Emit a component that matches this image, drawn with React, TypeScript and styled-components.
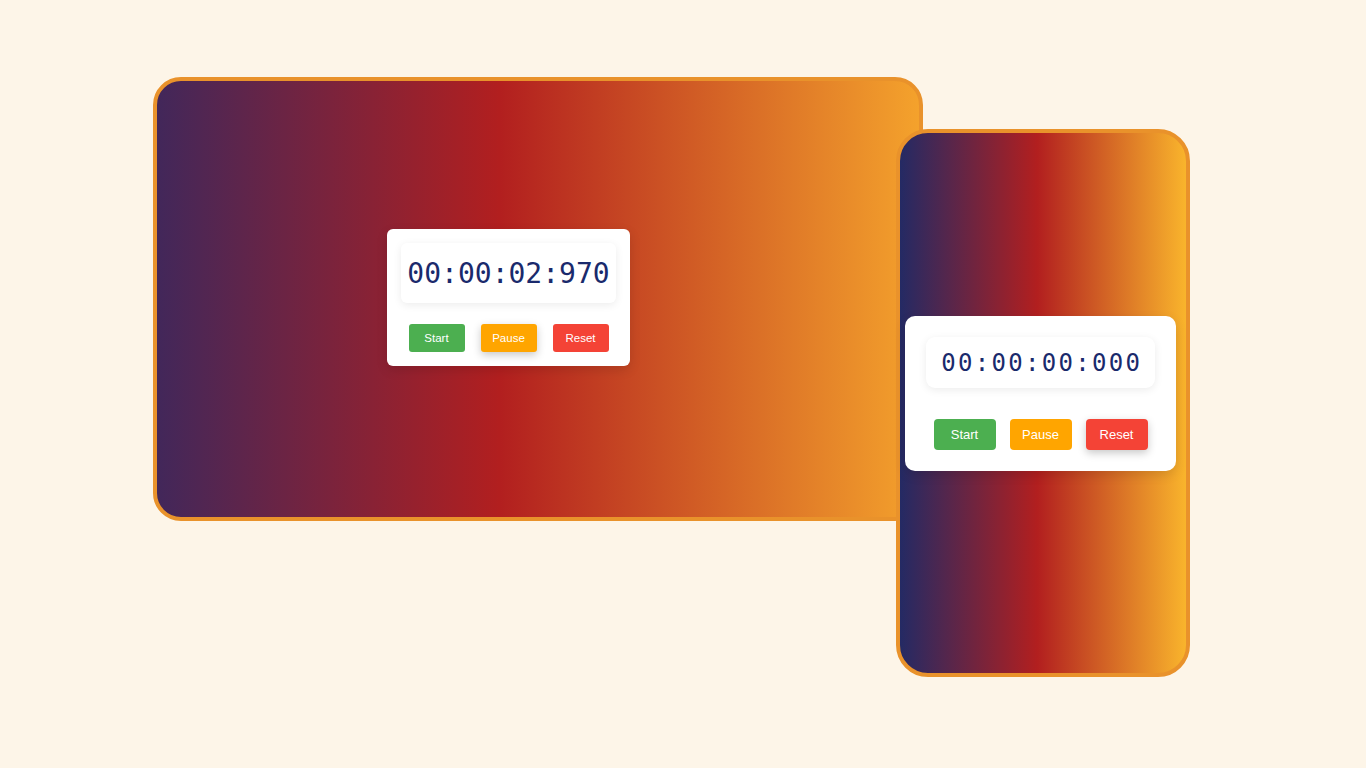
import React from "react";
import styled, { createGlobalStyle } from "styled-components";

const Global = createGlobalStyle`
  html, body { margin: 0; padding: 0; background: #fdf5e8; }
  body { font-family: "Liberation Sans", Arial, sans-serif; }
`;

const Stage = styled.div`
  display: flex;
  align-items: flex-start;
  padding: 77px 0 0 153px;
  min-height: 768px;
  box-sizing: border-box;
`;

const Laptop = styled.div`
  box-sizing: border-box;
  width: 770px;
  height: 444px;
  border: 4px solid #e9922b;
  border-radius: 28px;
  background: linear-gradient(to right, #42275a 0%, #b21f1f 45%, #f4a22c 100%);
  display: flex;
  align-items: center;
  padding: 0 0 3px 230px;
`;

const Phone = styled.div`
  box-sizing: border-box;
  width: 294px;
  height: 548px;
  margin: 52px 0 0 -27px;
  border: 4px solid #e9922b;
  border-radius: 32px;
  background: linear-gradient(to right, #242a64 0%, #b21f1f 48%, #f9b42c 100%);
  display: flex;
  align-items: flex-start;
  padding: 183px 0 0 5px;
  position: relative;
  z-index: 1;
`;

type Size = { $phone?: boolean };

const Card = styled.div<Size>`
  box-sizing: border-box;
  width: ${(p) => (p.$phone ? 271 : 243)}px;
  padding: ${(p) => (p.$phone ? 21 : 14)}px;
  background: #ffffff;
  border-radius: ${(p) => (p.$phone ? 10 : 6)}px;
  box-shadow: 0 4px 12px rgba(0, 0, 0, 0.12);
  display: flex;
  flex-direction: column;
  gap: ${(p) => (p.$phone ? 31 : 21)}px;
`;

const Display = styled.div<Size>`
  height: ${(p) => (p.$phone ? 51 : 60)}px;
  border-radius: ${(p) => (p.$phone ? 9 : 6)}px;
  background: #ffffff;
  box-shadow: 0 2px 8px rgba(0, 0, 0, 0.08);
  display: flex;
  align-items: center;
  justify-content: center;
  font-family: "DejaVu Sans Mono", monospace;
  font-size: ${(p) => (p.$phone ? 24 : 28)}px;
  letter-spacing: ${(p) => (p.$phone ? 2.3 : 0)}px;
  padding-left: ${(p) => (p.$phone ? 2.3 : 0)}px;
  color: #1a2a6c;
`;

const Buttons = styled.div<Size>`
  display: flex;
  justify-content: center;
  gap: ${(p) => (p.$phone ? 14 : 16)}px;
`;

const colors = { start: "#4caf50", pause: "#ffa500", reset: "#f44336" };

const Btn = styled.button<Size & { $kind: keyof typeof colors; $raised?: boolean }>`
  width: ${(p) => (p.$phone ? 62 : 56)}px;
  height: ${(p) => (p.$phone ? 31 : 28)}px;
  border: none;
  border-radius: ${(p) => (p.$phone ? 4 : 3)}px;
  padding: 0;
  background: ${(p) => colors[p.$kind]};
  color: #ffffff;
  font-family: "Liberation Sans", Arial, sans-serif;
  font-size: ${(p) => (p.$phone ? 13 : 11.5)}px;
  box-shadow: ${(p) => (p.$raised ? "0 3px 8px rgba(0,0,0,0.22)" : "none")};
  cursor: pointer;
`;

function Stopwatch({ phone, time, raised }: { phone?: boolean; time: string; raised: keyof typeof colors }) {
  return (
    <Card $phone={phone}>
      <Display $phone={phone}>{time}</Display>
      <Buttons $phone={phone}>
        <Btn $phone={phone} $kind="start" $raised={raised === "start"}>Start</Btn>
        <Btn $phone={phone} $kind="pause" $raised={raised === "pause"}>Pause</Btn>
        <Btn $phone={phone} $kind="reset" $raised={raised === "reset"}>Reset</Btn>
      </Buttons>
    </Card>
  );
}

export default function App() {
  return (
    <>
      <Global />
      <Stage>
        <Laptop>
          <Stopwatch time="00:00:02:970" raised="pause" />
        </Laptop>
        <Phone>
          <Stopwatch phone time="00:00:00:000" raised="reset" />
        </Phone>
      </Stage>
    </>
  );
}
